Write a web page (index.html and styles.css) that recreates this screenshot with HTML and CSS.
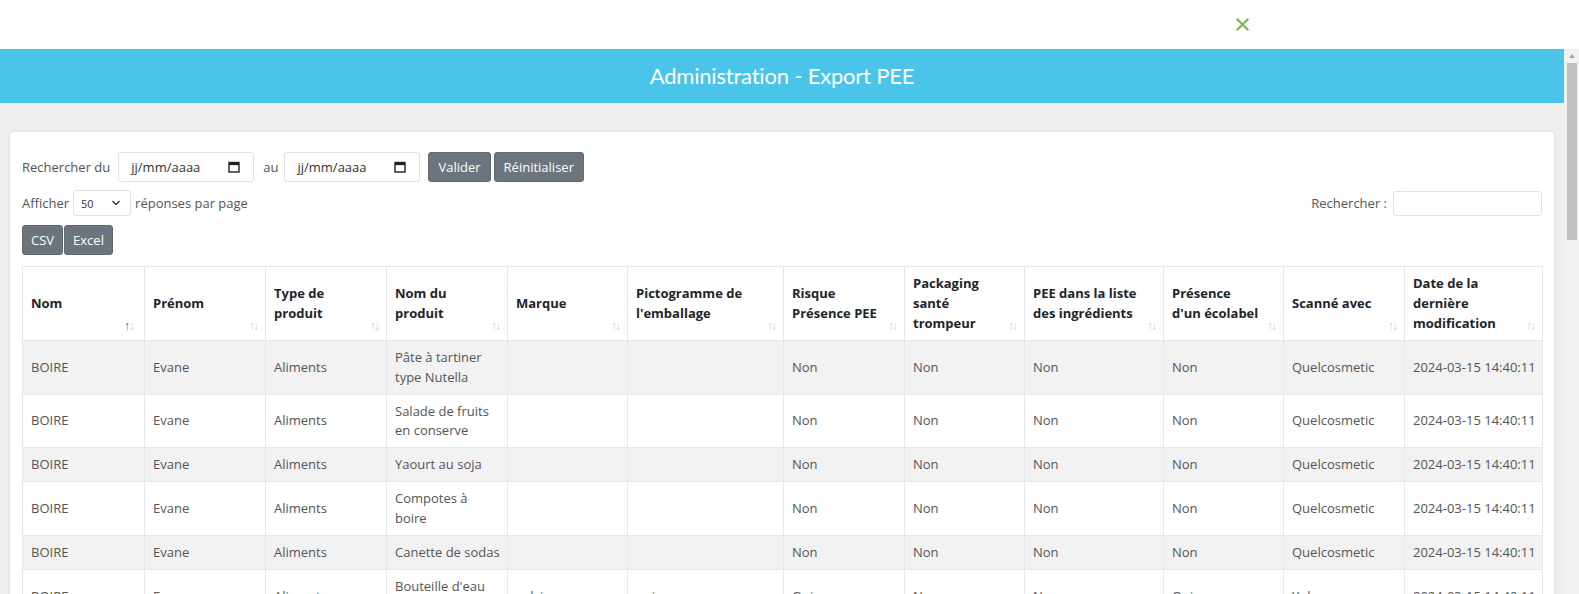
FILE: index.html
```html
<!DOCTYPE html>
<html lang="fr">
<head>
<meta charset="utf-8">
<title>Administration - Export PEE</title>
<link rel="stylesheet" href="styles.css">
</head>
<body>
<div class="topbar">
  <button class="close" aria-label="Fermer">
    <svg width="13" height="13" viewBox="0 0 13 13"><path d="M1.5 1.5 L11.5 11.5 M11.5 1.5 L1.5 11.5" stroke="#76c04d" stroke-width="2.4" stroke-linecap="round"/></svg>
  </button>
</div>
<div class="frame">
  <div class="viewport">
    <div class="banner">Administration - Export PEE</div>
    <div class="page">
      <div class="card">
        <div class="filters">
          <span class="lbl">Rechercher du</span>
          <span class="date-input first"><span>jj/mm/aaaa</span>
            <svg width="12" height="12" viewBox="0 0 12 12"><rect x="1" y="1.5" width="10" height="9.5" fill="none" stroke="#222" stroke-width="1.4"/><rect x="1" y="1.5" width="10" height="2.6" fill="#222"/></svg></span>
          <span class="lbl au">au</span>
          <span class="date-input"><span>jj/mm/aaaa</span>
            <svg width="12" height="12" viewBox="0 0 12 12"><rect x="1" y="1.5" width="10" height="9.5" fill="none" stroke="#222" stroke-width="1.4"/><rect x="1" y="1.5" width="10" height="2.6" fill="#222"/></svg></span>
          <button class="btn btn-valider">Valider</button>
          <button class="btn">Réinitialiser</button>
        </div>
        <div class="length-row">
          <div class="length">
            <span>Afficher</span>
            <span class="select">50
              <svg width="10" height="6" viewBox="0 0 10 6"><path d="M1.5 1 L5 4.5 L8.5 1" fill="none" stroke="#333" stroke-width="1.3"/></svg></span>
            <span>réponses par page</span>
          </div>
          <div class="search">
            <span>Rechercher :</span>
            <span class="search-input"></span>
          </div>
        </div>
        <div class="exports">
          <button class="btn">CSV</button>
          <button class="btn">Excel</button>
        </div>
        <table class="data">
          <colgroup>
            <col class="w122"><col class="w121"><col class="w121"><col class="w121"><col class="w120"><col class="w156"><col class="w121"><col class="w120"><col class="w139"><col class="w120"><col class="w121"><col class="w138">
          </colgroup>
          <thead>
            <tr>
              <th class="sorted">Nom</th>
              <th>Prénom</th>
              <th>Type de produit</th>
              <th>Nom du produit</th>
              <th>Marque</th>
              <th>Pictogramme de l'emballage</th>
              <th>Risque Présence PEE</th>
              <th>Packaging santé trompeur</th>
              <th>PEE dans la liste des ingrédients</th>
              <th>Présence<br>d'un écolabel</th>
              <th>Scanné avec</th>
              <th>Date de la dernière modification</th>
            </tr>
          </thead>
          <tbody>
            <tr><td>BOIRE</td><td>Evane</td><td>Aliments</td><td>Pâte à tartiner type Nutella</td><td></td><td></td><td>Non</td><td>Non</td><td>Non</td><td>Non</td><td>Quelcosmetic</td><td class="date">2024-03-15 14:40:11</td></tr>
            <tr><td>BOIRE</td><td>Evane</td><td>Aliments</td><td>Salade de fruits en conserve</td><td></td><td></td><td>Non</td><td>Non</td><td>Non</td><td>Non</td><td>Quelcosmetic</td><td class="date">2024-03-15 14:40:11</td></tr>
            <tr><td>BOIRE</td><td>Evane</td><td>Aliments</td><td>Yaourt au soja</td><td></td><td></td><td>Non</td><td>Non</td><td>Non</td><td>Non</td><td>Quelcosmetic</td><td class="date">2024-03-15 14:40:11</td></tr>
            <tr><td>BOIRE</td><td>Evane</td><td>Aliments</td><td>Compotes à boire</td><td></td><td></td><td>Non</td><td>Non</td><td>Non</td><td>Non</td><td>Quelcosmetic</td><td class="date">2024-03-15 14:40:11</td></tr>
            <tr><td>BOIRE</td><td>Evane</td><td>Aliments</td><td>Canette de sodas</td><td></td><td></td><td>Non</td><td>Non</td><td>Non</td><td>Non</td><td>Quelcosmetic</td><td class="date">2024-03-15 14:40:11</td></tr>
            <tr><td>BOIRE</td><td>Evane</td><td>Aliments</td><td>Bouteille d'eau minérale</td><td>volvic</td><td>oui</td><td>Oui</td><td>Non</td><td>Non</td><td>Oui</td><td>Yuka</td><td class="date">2024-03-15 14:40:11</td></tr>
            <tr><td>BOIRE</td><td>Evane</td><td>Cosmétiques</td><td>Gel douche</td><td>dove</td><td>non</td><td>Oui</td><td>Non</td><td>Oui</td><td>Non</td><td>Yuka</td><td class="date">2024-03-15 14:40:11</td></tr>
            <tr><td>BOIRE</td><td>Evane</td><td>Cosmétiques</td><td>Shampoing</td><td>elseve</td><td>non</td><td>Oui</td><td>Non</td><td>Oui</td><td>Non</td><td>Yuka</td><td class="date">2024-03-15 14:40:11</td></tr>
            <tr><td>BOIRE</td><td>Evane</td><td>Cosmétiques</td><td>Crème hydratante</td><td>nivea</td><td>oui</td><td>Oui</td><td>Oui</td><td>Oui</td><td>Non</td><td>Quelcosmetic</td><td class="date">2024-03-15 14:40:11</td></tr>
            <tr><td>BOIRE</td><td>Evane</td><td>Cosmétiques</td><td>Dentifrice</td><td>signal</td><td>non</td><td>Non</td><td>Non</td><td>Non</td><td>Non</td><td>Yuka</td><td class="date">2024-03-15 14:40:11</td></tr>
          </tbody>
        </table>
        <div class="footer">
          <span>Affichage de l'élément 1 à 10 sur 10 éléments</span>
          <span class="pager"><button class="pg">Précédent</button><button class="pg active">1</button><button class="pg">Suivant</button></span>
        </div>
      </div>
    </div>
  </div>
  <div class="scrollbar" aria-hidden="true">
    <span class="sb-up"></span>
    <span class="sb-thumb"></span>
  </div>
</div>
</body>
</html>
```

FILE: styles.css
```css
* { box-sizing: border-box; }
html, body { margin: 0; padding: 0; height: 100%; overflow: hidden; }
body {
  font-family: "Open Sans", "Liberation Sans", sans-serif;
  font-size: 13px;
  color: #555;
  background: #fff;
}
.topbar {
  height: 49px;
  display: flex;
  justify-content: flex-end;
  align-items: center;
  padding-right: 330px;
}
.close {
  border: 0;
  background: none;
  padding: 0;
  width: 13px;
  height: 13px;
  display: flex;
  cursor: pointer;
}
.frame {
  height: 560px;
  display: flex;
  overflow: hidden;
}
.viewport {
  flex: 1;
  min-width: 0;
  overflow: hidden;
  background: #eeeeee;
}
.scrollbar {
  width: 15px;
  flex: none;
  background: #f1f1f1;
  display: flex;
  flex-direction: column;
}
.sb-up {
  height: 14px;
  display: flex;
  align-items: center;
  justify-content: center;
  padding-left: 1px;
}
.sb-up::before {
  content: "";
  width: 0;
  height: 0;
  border-left: 3.5px solid transparent;
  border-right: 3.5px solid transparent;
  border-bottom: 4px solid #a3a3a3;
}
.sb-thumb {
  width: 10px;
  height: 177px;
  margin-left: 3px;
  background: #c1c1c1;
}
.banner {
  height: 54px;
  background: #4bc4ea;
  color: #fff;
  text-align: center;
  line-height: 54px;
  font-family: "Lato", "Open Sans", sans-serif;
  font-size: 22px;
  letter-spacing: -0.2px;
}
.page {
  padding: 29px 10px 20px 10px;
}
.card {
  background: #fff;
  border-radius: 4px;
  box-shadow: 0 0 4px rgba(0,0,0,0.08);
  padding: 20px 12px 20px 12px;
}
.filters {
  display: flex;
  align-items: center;
  height: 30px;
}
.lbl { color: #555; }
.au { margin: 0 6px 0 9px; }
.date-input {
  width: 136px;
  height: 30px;
  border: 1px solid #dde2e8;
  border-radius: 3px;
  display: flex;
  align-items: center;
  justify-content: space-between;
  padding: 0 13px 0 12px;
  color: #333;
}
.date-input.first { margin-left: 8px; }
.btn {
  font-family: "Open Sans", "Liberation Sans", sans-serif;
  font-size: 13px;
  color: #fff;
  background: #6c757d;
  border: 1px solid #62696f;
  border-radius: 3px;
  height: 30px;
  padding: 0 9px;
  margin: 0;
  cursor: pointer;
}
.btn-valider { margin-left: 8px; margin-right: 3px; }
.length-row {
  display: flex;
  justify-content: space-between;
  align-items: center;
  margin-top: 8px;
  height: 26px;
}
.length { display: flex; align-items: center; }
.select {
  width: 58px;
  height: 26px;
  margin: 0 4px 0 4px;
  border: 1px solid #dde2e8;
  border-radius: 3px;
  display: flex;
  align-items: center;
  justify-content: space-between;
  padding: 0 9px 0 7px;
  font-size: 11px;
  color: #333;
}
.search { display: flex; align-items: center; }
.search-input {
  display: block;
  width: 149px;
  height: 25px;
  margin-left: 6px;
  border: 1px solid #dde2e8;
  border-radius: 3px;
}
.exports {
  display: flex;
  gap: 1px;
  margin-top: 9px;
}
.exports .btn { padding: 0 8px; }
table.data {
  margin-top: 11px;
  width: 1520px;
  table-layout: fixed;
  border-collapse: collapse;
  border: 1px solid #e6e8eb;
}
.w120 { width: 120px; }
.w121 { width: 121px; }
.w122 { width: 122px; }
.w138 { width: 138px; }
.w139 { width: 139px; }
.w156 { width: 156px; }
th, td {
  border: 1px solid #e6e8eb;
  line-height: 19.9px;
  padding: 7px 5px 6px 8px;
  text-align: left;
  vertical-align: middle;
}
th {
  position: relative;
  color: #212529;
  font-weight: 700;
  padding-right: 18px;
  background: #fff;
}
th::after {
  content: "↑↓";
  position: absolute;
  right: 8px;
  bottom: 8px;
  font-size: 12px;
  line-height: 12px;
  letter-spacing: -2px;
  color: #cdd1d5;
  font-weight: 400;
}
th.sorted::after {
  content: "↓";
  letter-spacing: 0;
  right: 9px;
}
th.sorted::before {
  content: "↑";
  position: absolute;
  right: 14px;
  bottom: 8px;
  font-size: 12px;
  line-height: 12px;
  color: #4d6680;
  font-weight: 400;
}
td { color: #555; }
td.date { white-space: nowrap; padding-right: 2px; }
tbody tr:nth-child(odd) td { background: #f2f2f2; }
.footer {
  display: flex;
  justify-content: space-between;
  align-items: center;
  margin-top: 12px;
}
.pager { display: flex; }
.pg {
  font-family: inherit;
  font-size: 13px;
  border: 1px solid #dee2e6;
  background: #fff;
  color: #6c757d;
  padding: 5px 10px;
  margin-left: -1px;
}
.pg.active { background: #6c757d; color: #fff; border-color: #6c757d; }
```
